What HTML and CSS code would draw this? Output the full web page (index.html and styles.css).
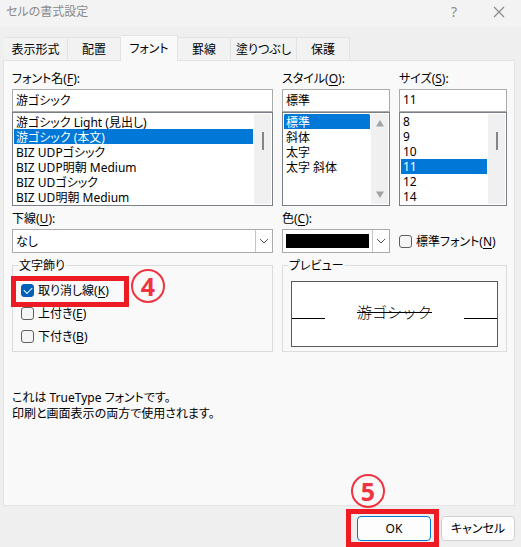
FILE: index.html
```html
<!DOCTYPE html>
<html lang="ja">
<head>
  <meta charset="utf-8">
  <meta name="viewport" content="width=device-width, initial-scale=1">
  <title>セルの書式設定</title>
  <link rel="stylesheet" href="styles.css">
</head>
<body>

  <header class="titlebar">
    <h1>セルの書式設定</h1>
    <button type="button" class="title-btn" aria-label="ヘルプ">?</button>
    <button type="button" class="title-btn" aria-label="閉じる">
      <svg width="12" height="12" viewBox="0 0 12 12"><path d="M1 1L11 11M11 1L1 11" stroke="#8a8a8a" stroke-width="1.2" fill="none"/></svg>
    </button>
  </header>

  <form class="dialog">
    <nav class="tabs">
      <button type="button">表示形式</button>
      <button type="button">配置</button>
      <button type="button" class="active">フォント</button>
      <button type="button">罫線</button>
      <button type="button">塗りつぶし</button>
      <button type="button">保護</button>
    </nav>

    <main class="panel">
      <div class="grid">
        <div class="field">
          <label for="fontName">フォント名(<u>F</u>):</label>
          <input type="text" id="fontName" value="游ゴシック">
          <div class="listbox">
            <select size="6" aria-label="フォント名の一覧">
              <option>游ゴシック Light (見出し)</option>
              <option selected>游ゴシック (本文)</option>
              <option>BIZ UDPゴシック</option>
              <option>BIZ UDP明朝 Medium</option>
              <option>BIZ UDゴシック</option>
              <option>BIZ UD明朝 Medium</option>
            </select>
            <div class="scroll"><span class="thumb"></span></div>
          </div>
        </div>

        <div class="field">
          <label for="fontStyle">スタイル(<u>O</u>):</label>
          <input type="text" id="fontStyle" value="標準">
          <div class="listbox">
            <select size="6" aria-label="スタイルの一覧">
              <option selected>標準</option>
              <option>斜体</option>
              <option>太字</option>
              <option>太字 斜体</option>
            </select>
            <div class="scroll arrows">
              <svg width="8" height="7" viewBox="0 0 8 7"><path d="M4 0L8 6.5H0Z" fill="#a3a3a3"/></svg>
              <svg width="8" height="7" viewBox="0 0 8 7"><path d="M4 7L8 .5H0Z" fill="#a3a3a3"/></svg>
            </div>
          </div>
        </div>

        <div class="field">
          <label for="fontSize">サイズ(<u>S</u>):</label>
          <input type="text" id="fontSize" value="11">
          <div class="listbox">
            <select size="6" aria-label="サイズの一覧">
              <option>8</option>
              <option>9</option>
              <option>10</option>
              <option selected>11</option>
              <option>12</option>
              <option>14</option>
            </select>
            <div class="scroll"><span class="thumb"></span></div>
          </div>
        </div>

        <div class="field">
          <label for="underline">下線(<u>U</u>):</label>
          <div class="combo">
            <select id="underline"><option>なし</option></select>
            <span class="arrow"><svg width="10" height="6" viewBox="0 0 10 6"><path d="M1 1L5 5L9 1" stroke="#555" fill="none"/></svg></span>
          </div>
        </div>

        <div class="field">
          <label for="color">色(<u>C</u>):</label>
          <div class="combo">
            <select id="color" class="swatch"><option value="#000000"></option></select>
            <span class="arrow"><svg width="10" height="6" viewBox="0 0 10 6"><path d="M1 1L5 5L9 1" stroke="#555" fill="none"/></svg></span>
          </div>
        </div>

        <label class="check normal-font"><input type="checkbox">標準フォント(<u>N</u>)</label>

        <fieldset class="effects">
          <legend>文字飾り</legend>
          <div class="effect-row">
            <label class="check"><input type="checkbox" checked>取り消し線(<u>K</u>)</label>
            <span class="mark-box"></span>
            <span class="mark-num">4</span>
          </div>
          <div class="effect-row">
            <label class="check"><input type="checkbox">上付き(<u>E</u>)</label>
          </div>
          <div class="effect-row">
            <label class="check"><input type="checkbox">下付き(<u>B</u>)</label>
          </div>
        </fieldset>

        <fieldset class="preview">
          <legend>プレビュー</legend>
          <div class="preview-box">
            <span class="rule"></span>
            <s>游ゴシック</s>
            <span class="rule"></span>
          </div>
        </fieldset>
      </div>

      <div class="note">
        <p>これは TrueType フォントです。</p>
        <p>印刷と画面表示の両方で使用されます。</p>
      </div>
    </main>

    <footer class="buttons">
      <div class="ok-wrap">
        <button type="button" class="ok">OK</button>
        <span class="mark-box"></span>
        <span class="mark-num">5</span>
      </div>
      <button type="button">キャンセル</button>
    </footer>
  </form>

</body>
</html>
```

FILE: styles.css
```css
* {
  box-sizing: border-box;
}
body {
  margin: 0;
  min-height: 100vh;
  display: flex;
  flex-direction: column;
  background-color: #efefef;
  color: #000;
}
body, button, input, select {
  font-family: "Noto Sans", "Noto Sans CJK JP", sans-serif;
  font-size: 12px;
  line-height: 15px;
  font-feature-settings: "palt";
}
u {
  text-underline-offset: 2px;
}

/* title bar */
.titlebar {
  display: flex;
  align-items: center;
  height: 27px;
  padding: 0 5px 4px 6px;
  background-color: #f3f3f3;
  color: #8a8a8a;
}
h1 {
  flex: 1;
  margin: 0;
  font-size: 12px;
  font-weight: normal;
}
.title-btn {
  display: flex;
  align-items: center;
  justify-content: center;
  width: 34px;
  height: 22px;
  margin-left: 11px;
  padding: 0;
  border: none;
  background: none;
  color: #8a8a8a;
  font-size: 14px;
}

.dialog {
  flex: 1;
  display: flex;
  flex-direction: column;
  padding: 8px 6px 6px 3px;
}

/* tabs */
.tabs {
  display: flex;
  align-items: flex-end;
  padding-left: 1px;
}
.tabs button {
  min-width: 53px;
  height: 23px;
  padding: 0 5px;
  border: 1px solid #e3e3e3;
  border-width: 1px 1px 0 0;
  background-color: #f2f2f2;
  color: #000;
  white-space: nowrap;
}
.tabs button:first-child {
  min-width: 64px;
}
.tabs .active {
  position: relative;
  min-width: 57px;
  height: 26px;
  margin-bottom: -1px;
  background-color: #f9f9f9;
}
.tabs button:nth-child(5) {
  min-width: 66px;
}

/* panel */
.panel {
  flex: 1;
  padding: 10px 7px 0 8px;
  background-color: #f9f9f9;
  border: 1px solid #e3e3e3;
}
.grid {
  display: grid;
  grid-template-columns: minmax(0, 1fr) 108px 108px;
  column-gap: 9px;
}
.field {
  display: flex;
  flex-direction: column;
}
.field label {
  height: 18px;
}
.field input {
  width: 100%;
  height: 23px;
  padding: 0 3px 2px;
  border: 1px solid #ababab;
  background-color: #fff;
}
.listbox {
  display: flex;
  height: 94px;
  margin-bottom: 5px;
  padding: 1px;
  border: 1px solid #7a7f87;
  background-color: #fff;
}
.listbox select {
  flex: 1;
  min-width: 0;
  height: 90px;
  padding: 0;
  border: none;
  outline: none;
  overflow: hidden;
  background-color: #fff;
}
.listbox option {
  display: flex;
  align-items: center;
  height: 15px;
  min-height: 15px;
  padding: 0 2px;
  color: #000;
}
.listbox option:checked {
  background: #0078d7 linear-gradient(#0078d7, #0078d7);
  color: #fff;
  -webkit-text-fill-color: #fff;
}
.scroll {
  display: flex;
  justify-content: center;
  width: 17px;
  margin-left: 1px;
  padding: 18px 0 0;
  background-color: #f0f0f0;
}
.thumb {
  width: 2px;
  height: 18px;
  background-color: #858585;
}
.arrows {
  flex-direction: column;
  justify-content: space-between;
  align-items: center;
  padding: 6px 0;
}

/* drop-downs */
.combo {
  display: flex;
  height: 24px;
  border: 1px solid #ababab;
  background-color: #fff;
}
.combo select {
  appearance: none;
  flex: 1;
  min-width: 0;
  padding: 0 3px;
  border: none;
  background-color: #fff;
  color: #000;
}
.combo .swatch {
  padding: 4px 3px;
  background-color: #000;
  background-clip: content-box;
}
.arrow {
  display: flex;
  align-items: center;
  justify-content: center;
  width: 17px;
  border-left: 1px solid #c4c4c4;
}

/* check boxes */
.check {
  display: flex;
  align-items: center;
  white-space: nowrap;
}
.check input {
  appearance: none;
  width: 13px;
  height: 13px;
  margin: 0 4px 0 0;
  border: 1px solid #5f5f5f;
  border-radius: 3px;
  background-color: #f5f5f5;
}
.check input:checked {
  display: flex;
  align-items: center;
  justify-content: center;
  border-color: #005fb8;
  background-color: #005fb8;
}
.check input:checked::before {
  content: "";
  width: 7px;
  height: 4px;
  margin-bottom: 2px;
  border: solid #fff;
  border-width: 0 0 1px 1px;
  transform: rotate(-45deg);
}
.normal-font {
  align-self: end;
  height: 24px;
}

/* group boxes */
fieldset {
  min-width: 0;
  height: 94px;
  margin: 5px 0 0;
  padding: 6px 8px;
  border: 1px solid #dcdcdc;
}
legend {
  margin-left: -3px;
  padding: 0 1px;
}
.effect-row {
  position: relative;
  display: flex;
  align-items: center;
  height: 23px;
}
.preview {
  grid-column: span 2;
}
.preview-box {
  display: flex;
  align-items: center;
  justify-content: space-between;
  height: 66px;
  margin-top: 2px;
  border: 1px solid #5a5a5a;
  background-color: #fff;
}
.preview-box s {
  padding-bottom: 5px;
  font-family: "Noto Sans CJK JP", sans-serif;
  font-size: 15px;
  font-weight: 300;
  font-feature-settings: normal;
}
.rule {
  width: 33px;
  height: 1px;
  margin-top: 8px;
  background-color: #000;
}
.note {
  margin-top: 38px;
  line-height: 16px;
}
.note p {
  margin: 0;
}

/* buttons */
.buttons {
  display: flex;
  justify-content: flex-end;
  gap: 10px;
  padding-top: 10px;
}
.buttons button {
  width: 74px;
  height: 25px;
  padding: 0;
  border: 1px solid #d0d0d0;
  border-radius: 4px;
  background-color: #fdfdfd;
  color: #000;
}
.buttons .ok {
  border-color: #0078d4;
}
.ok-wrap {
  position: relative;
}

/* red step marks */
.mark-box {
  position: absolute;
  border: 5px solid #ed1c24;
  pointer-events: none;
}
.mark-num {
  position: absolute;
  display: flex;
  align-items: center;
  justify-content: center;
  width: 34px;
  height: 34px;
  border: 2px solid #ef3340;
  border-radius: 50%;
  color: #ef3340;
  font-size: 25px;
  font-weight: bold;
  line-height: 28px;
}
.effect-row .mark-box {
  top: -3px;
  left: -10px;
  width: 118px;
  height: 31px;
}
.effect-row .mark-num {
  top: -10px;
  left: 110px;
}
.ok-wrap .mark-box {
  top: -7px;
  right: -8px;
  bottom: -6px;
  left: -11px;
}
.ok-wrap .mark-num {
  top: -42px;
  left: -6px;
}
```
